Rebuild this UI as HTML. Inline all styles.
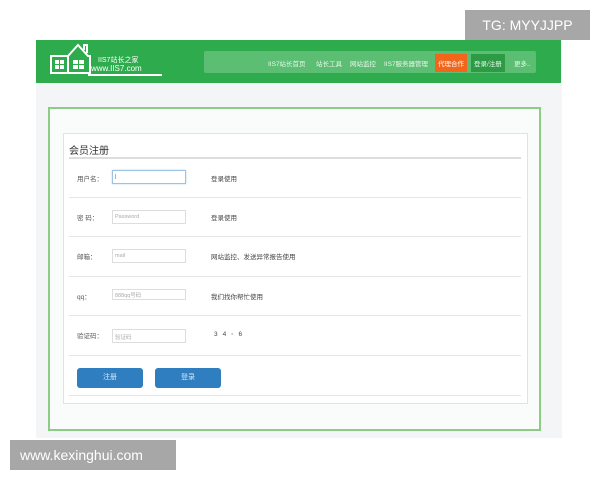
<!DOCTYPE html>
<html><head><meta charset="utf-8"><style>
*{margin:0;padding:0;box-sizing:border-box}
body{width:600px;height:480px;background:#fff;position:relative;overflow:hidden;font-family:"Liberation Sans","Noto Sans CJK SC",sans-serif}
.abs{position:absolute}
.bg{left:36px;top:40px;width:526px;height:398px;background:#f3f5f6}
.hdr{left:36px;top:40px;width:525px;height:43px;background:#2eab4c}
.nav{left:204px;top:51px;width:332px;height:22px;background:#5cbe72;border-radius:2px}
.nav span{position:absolute;top:7px;font-size:6.5px;color:#eaf7ec;white-space:nowrap}
.panel{left:48px;top:107px;width:493px;height:324px;background:#fafbfb;border:2px solid #8ccc85}
.card{left:63px;top:133px;width:465px;height:271px;background:#fff;border:1px solid #e2e2e2}
.line{left:69px;width:452px;height:1px;background:#e6e6e6}
.lbl{font-size:6.5px;color:#555;left:77px}
.inp{left:112px;width:74px;height:14px;border:1px solid #ddd;background:#fff;font-size:5.5px;color:#aaa;padding:3px 0 0 2px}
.tip{left:211px;font-size:6.5px;color:#444}
.btn{top:368px;width:66px;height:20px;background:#2f7fc0;border-radius:3px;color:#d8e8f6;font-size:7px;text-align:center;line-height:20px}
.wm{background:#a7a7a7;color:#fff;font-size:14px}
</style></head><body>
<div class="abs bg"></div>
<div class="abs hdr"></div>
<svg class="abs" style="left:48px;top:42px" width="120" height="36" viewBox="0 0 120 36">
<g fill="none" stroke="#fff" stroke-width="2">
<path d="M3 14 L20 14 L30 3 L40 14 L42 14 L42 31 L3 31 Z"/>
<path d="M20 14 L20 31"/>
<path d="M36 8 L36 3 L39 3 L39 11"/>
</g>
<g fill="#fff">
<rect x="7" y="18" width="4" height="4"/><rect x="12" y="18" width="4" height="4"/>
<rect x="7" y="23" width="4" height="4"/><rect x="12" y="23" width="4" height="4"/>
<rect x="25" y="18" width="5" height="4"/><rect x="31" y="18" width="5" height="4"/>
<rect x="25" y="23" width="5" height="4"/><rect x="31" y="23" width="5" height="4"/>
<rect x="40" y="32" width="74" height="2"/>
</g>
<text x="50" y="20" font-size="7" fill="#fff" font-family="Liberation Sans,Noto Sans CJK SC,sans-serif">IIS7站长之家</text>
<text x="43" y="29" font-size="8" fill="#fff" font-family="Liberation Sans,sans-serif">www.IIS7.com</text>
</svg>
<div class="abs nav">
<span style="left:64px">IIS7站长首页</span>
<span style="left:112px">站长工具</span>
<span style="left:146px">网站监控</span>
<span style="left:180px">IIS7服务器管理</span>
<span style="left:231px;top:3px;background:#f2661c;padding:4px 3px;color:#fff">代理合作</span>
<span style="left:267px;top:3px;background:#2d9a46;padding:4px 3px">登录/注册</span>
<span style="left:310px">更多..</span>
</div>
<div class="abs panel"></div>
<div class="abs card"></div>
<div class="abs" style="left:69px;top:142px;font-size:10px;color:#333">会员注册</div>
<div class="abs line" style="top:157px;height:2px;background:#ddd"></div>
<div class="abs line" style="top:197px"></div>
<div class="abs line" style="top:236px"></div>
<div class="abs line" style="top:276px"></div>
<div class="abs line" style="top:315px"></div>
<div class="abs line" style="top:355px"></div>
<div class="abs line" style="top:395px"></div>
<div class="abs lbl" style="top:173px">用户名：</div>
<div class="abs inp" style="top:170px;border-color:#9cc3e6;box-shadow:0 0 2px #b8d6f0"><span style="color:#555">|</span></div>
<div class="abs tip" style="top:173px">登录使用</div>
<div class="abs lbl" style="top:212px">密 码：</div>
<div class="abs inp" style="top:210px">Password</div>
<div class="abs tip" style="top:212px">登录使用</div>
<div class="abs lbl" style="top:251px">邮箱：</div>
<div class="abs inp" style="top:249px">mail</div>
<div class="abs tip" style="top:251px">网站监控、发送异常报告使用</div>
<div class="abs lbl" style="top:291px">qq：</div>
<div class="abs inp" style="top:289px;height:11px;padding-top:1px">888qq号码</div>
<div class="abs tip" style="top:291px">我们找你帮忙使用</div>
<div class="abs lbl" style="top:330px">验证码：</div>
<div class="abs inp" style="top:329px">验证码</div>
<div class="abs tip" style="left:214px;top:331px;letter-spacing:5px">34◦6</div>
<div class="abs btn" style="left:77px">注册</div>
<div class="abs btn" style="left:155px">登录</div>
<div class="abs wm" style="left:465px;top:10px;width:125px;height:30px;line-height:30px;text-align:center">TG: MYYJJPP</div>
<div class="abs wm" style="left:10px;top:440px;width:166px;height:30px;line-height:30px;padding-left:10px">www.kexinghui.com</div>
</body></html>
